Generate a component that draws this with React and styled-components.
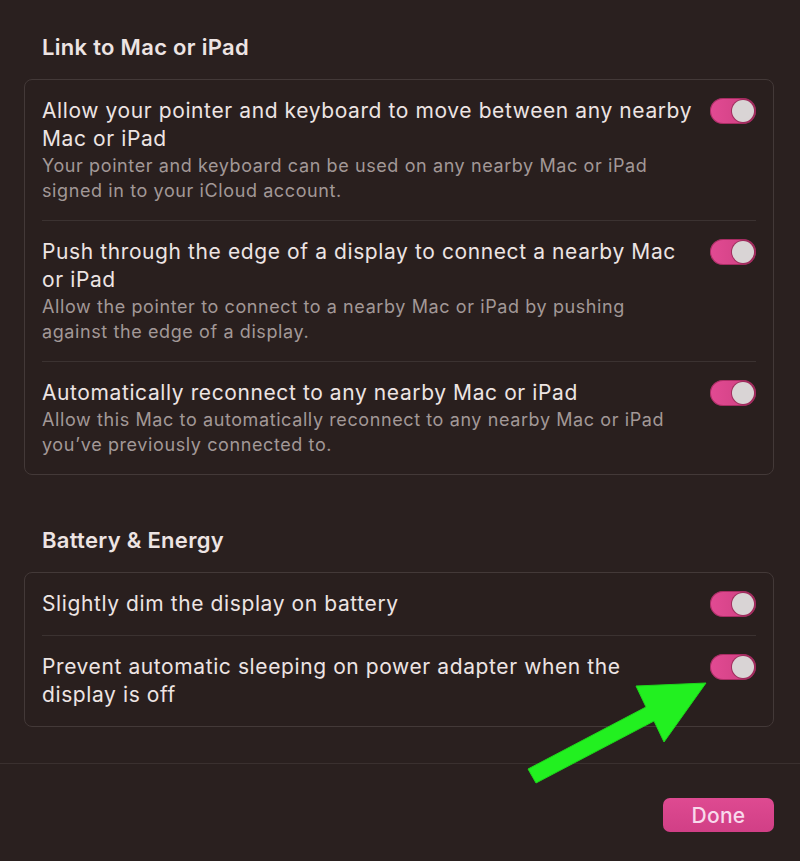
import React from 'react'
import styled, { createGlobalStyle } from 'styled-components'

const GlobalStyle = createGlobalStyle`
  html, body {
    margin: 0;
    padding: 0;
    background: #2a201f;
  }
  body {
    font-family: Inter, "Noto Sans", "Liberation Sans", sans-serif;
    -webkit-font-smoothing: antialiased;
  }
`

const Sheet = styled.div`
  position: relative;
  width: 800px;
  height: 861px;
  background: #2a201f;
  overflow: hidden;
`

const Content = styled.div`
  padding: 33px 26px 0 24px;
  display: flex;
  flex-direction: column;
`

const SectionTitle = styled.h3`
  margin: ${props => props.first ? '0' : '51px'} 0 18px 18px;
  font-size: 22px;
  line-height: 28px;
  letter-spacing: 0.3px;
  font-weight: 600;
  color: #ede4e3;
`

const Card = styled.div`
  border: 1px solid #433938;
  border-radius: 8px;
  background: #291f1e;
  padding: 0 17px;
`

const Row = styled.div`
  display: flex;
  align-items: flex-start;
  gap: 13px;
  padding: 17px 0;
  & + & {
    border-top: 1px solid #3b3231;
  }
`

const TextCol = styled.div`
  flex: 1;
  min-width: 0;
`

const RowTitle = styled.div`
  font-size: 21px;
  line-height: 28px;
  letter-spacing: 0.6px;
  color: #ede4e3;
`

const RowNote = styled.div`
  font-size: 18px;
  line-height: 25px;
  letter-spacing: 0.6px;
  color: #a29897;
  max-width: 650px;
`

const Toggle = styled.div`
  flex: none;
  margin-top: 1px;
  width: 46px;
  height: 26px;
  border-radius: 13px;
  background: linear-gradient(90deg, #e24a93, #cc3f80);
  box-shadow: inset 0 0 0 1px rgba(120, 20, 60, 0.5);
  display: flex;
  align-items: center;
  justify-content: flex-end;
  padding: 0 2px;
  box-sizing: border-box;
`

const Knob = styled.div`
  width: 22px;
  height: 22px;
  border-radius: 50%;
  background: #d9d4d5;
  box-shadow: 0 0 0 1px rgba(90, 20, 40, 0.45);
`

const Footer = styled.div`
  margin-top: 36px;
  border-top: 1px solid #3a302f;
  display: flex;
  justify-content: flex-end;
  padding: 34px 26px 0 0;
`

const DoneButton = styled.button`
  width: 111px;
  height: 34px;
  border: none;
  border-radius: 7px;
  background: linear-gradient(180deg, #de4a91, #d13f86);
  color: #f8d9ec;
  font-family: Inter, "Noto Sans", sans-serif;
  font-size: 21px;
  font-weight: 500;
  letter-spacing: 0.3px;
  padding: 0;
`

const ArrowLayer = styled.svg`
  position: absolute;
  left: 0;
  top: 0;
  pointer-events: none;
`

const linkRows = [
  {
    title: 'Allow your pointer and keyboard to move between any nearby Mac or iPad',
    note: 'Your pointer and keyboard can be used on any nearby Mac or iPad signed in to your iCloud account.'
  },
  {
    title: 'Push through the edge of a display to connect a nearby Mac or iPad',
    note: 'Allow the pointer to connect to a nearby Mac or iPad by pushing against the edge of a display.'
  },
  {
    title: 'Automatically reconnect to any nearby Mac or iPad',
    note: 'Allow this Mac to automatically reconnect to any nearby Mac or iPad you’ve previously connected to.'
  }
]

const batteryRows = [
  { title: 'Slightly dim the display on battery' },
  { title: 'Prevent automatic sleeping on power adapter when the display is off' }
]

const SettingRow = ({ title, note }) =>
  <Row>
    <TextCol>
      <RowTitle>{title}</RowTitle>
      {note && <RowNote>{note}</RowNote>}
    </TextCol>
    <Toggle><Knob /></Toggle>
  </Row>

const App = () =>
  <Sheet>
    <GlobalStyle />
    <Content>
      <SectionTitle first>Link to Mac or iPad</SectionTitle>
      <Card>
        {linkRows.map((r, i) => <SettingRow key={i} {...r} />)}
      </Card>
      <SectionTitle>Battery &amp; Energy</SectionTitle>
      <Card>
        {batteryRows.map((r, i) => <SettingRow key={i} {...r} />)}
      </Card>
    </Content>
    <Footer>
      <DoneButton>Done</DoneButton>
    </Footer>
    {/* annotation arrow */}
    <ArrowLayer width="800" height="861" viewBox="0 0 800 861">
      <polygon
        points="528,769 646,707 636,686 706,683 664,742 654,721 536,783"
        fill="#22f020"
        stroke="#1ed41c"
        strokeWidth="1"
        strokeLinejoin="round"
      />
    </ArrowLayer>
  </Sheet>

export default App
